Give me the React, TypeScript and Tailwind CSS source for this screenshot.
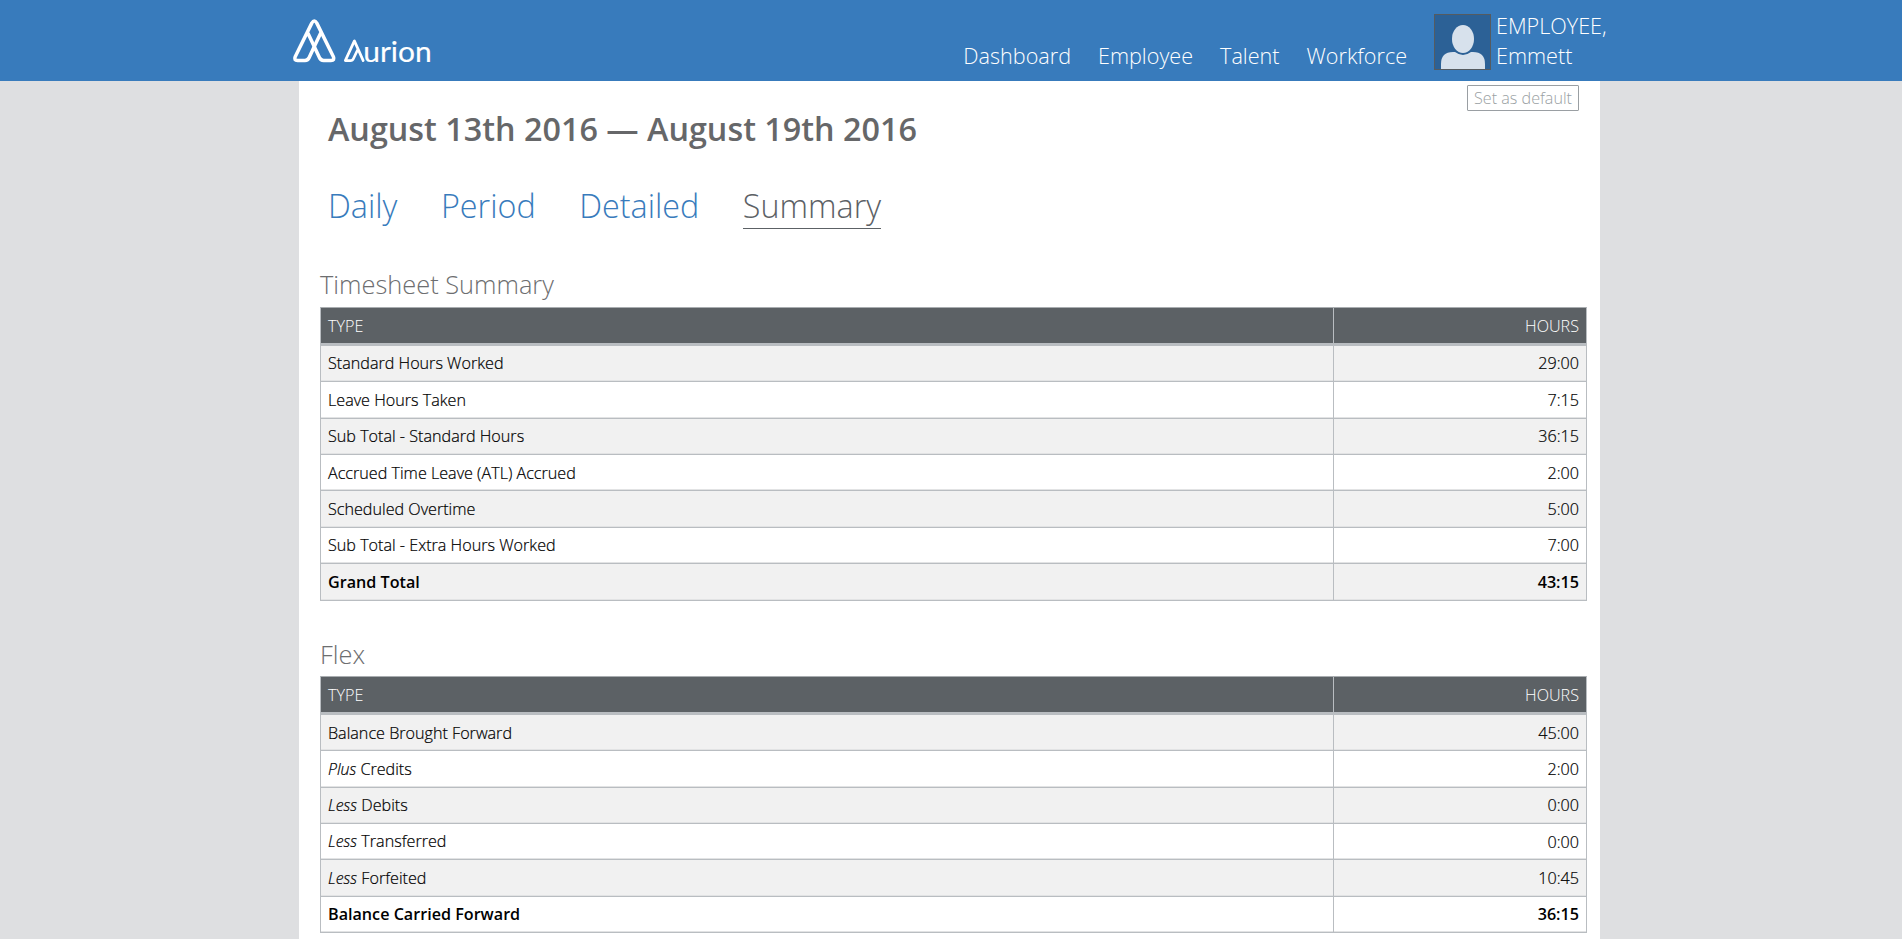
import type { ReactNode } from "react";

type Row = { label: ReactNode; hours: string; total?: boolean };

const timesheetRows: Row[] = [
  { label: "Standard Hours Worked", hours: "29:00" },
  { label: "Leave Hours Taken", hours: "7:15" },
  { label: "Sub Total - Standard Hours", hours: "36:15" },
  { label: "Accrued Time Leave (ATL) Accrued", hours: "2:00" },
  { label: "Scheduled Overtime", hours: "5:00" },
  { label: "Sub Total - Extra Hours Worked", hours: "7:00" },
  { label: "Grand Total", hours: "43:15", total: true },
];

const flexRows: Row[] = [
  { label: "Balance Brought Forward", hours: "45:00" },
  { label: <><em className="text-[15.9px]">Plus</em> Credits</>, hours: "2:00" },
  { label: <><em className="text-[15.9px]">Less</em> Debits</>, hours: "0:00" },
  { label: <><em className="text-[15.9px]">Less</em> Transferred</>, hours: "0:00" },
  { label: <><em className="text-[15.9px]">Less</em> Forfeited</>, hours: "10:45" },
  { label: "Balance Carried Forward", hours: "36:15", total: true },
];

function Logo() {
  return (
    <svg className="block h-[60px] w-[150px] overflow-visible" viewBox="0 0 150 60" fill="none" stroke="#fff" strokeLinecap="round" strokeLinejoin="round" aria-label="Aurion">
      <g strokeWidth="3.5">
        <path d="M23.3 30.5 L18.2 41.5 Q17 44.4 14 44.4 H6.6 Q2.6 44.4 4.2 40.7 L20.8 7.1 Q23.3 3.1 25.8 7.1 L42.4 40.7 Q44 44.4 40 44.4 H32.6 Q29.6 44.4 28.4 41.5 L17.1 17.5" />
        <path d="M23.3 30.5 L29.5 17.5" />
      </g>
      <path strokeWidth="2.7" d="M72.2 44.6 L63.4 24.9 L54.3 44.6 H59.5 Q61.6 44.6 62.5 42.5 L66.3 34.5" />
      <text x="72.2" y="45.6" fill="#fff" strokeWidth="0.15" fontFamily="Lato" fontSize="28" textLength="68.5" lengthAdjust="spacingAndGlyphs">urion</text>
    </svg>
  );
}

function Avatar() {
  return (
    <svg className="block h-[56px] w-[57px] border border-[#555b60] bg-[#2c6196]" viewBox="0 0 55 54">
      <ellipse cx="28" cy="24" rx="11" ry="14" fill="#d7e1ec" />
      <path d="M6 54 V49 Q6 37 18 37 H20 Q28 43 36 37 H38 Q50 37 50 49 V54 Z" fill="#d7e1ec" />
    </svg>
  );
}

function SummaryTable({ rows }: { rows: Row[] }) {
  return (
    <div className="w-[1267px] border border-t-[#a9adb0] border-[#b9bdc1] text-[16.15px]">
      <div className="flex h-[38px] border-b-[3px] border-[#b9bdc1] bg-[#5c6165] font-light text-white">
        <div className="flex grow items-center pl-[7px] pt-[2px]">TYPE</div>
        <div className="flex w-[253px] items-center justify-end border-l border-[#b9bdc1] pt-[2px] pr-[7px]">HOURS</div>
      </div>
      {rows.map((row, i) => (
        <div
          key={i}
          className={
            "flex h-[36.4px] border-b border-[#b9bdc1] text-black last:h-[35.4px] last:border-b-0 odd:bg-white even:bg-[#f1f1f1] " +
            (row.total ? "font-semibold" : "font-light [-webkit-text-stroke:0.2px_black]")
          }
        >
          <div className="flex grow items-center whitespace-pre pl-[7px] shadow-[inset_0_-1px_0_#e2e3e4]"><span>{row.label}</span></div>
          <div className="flex w-[253px] items-center justify-end border-l border-[#b9bdc1] pr-[7px] shadow-[inset_0_-1px_0_#e2e3e4]">{row.hours}</div>
        </div>
      ))}
    </div>
  );
}

export default function App() {
  return (
    <div className="flex h-[939px] w-[1902px] flex-col overflow-hidden bg-[#dedfe1] font-['Open_Sans',sans-serif]">
      <header className="flex h-[81px] shrink-0 bg-[#387bbc] text-white">
        <div className="pl-[291px] pt-[16px]"><Logo /></div>
        <nav className="ml-auto flex gap-[27px] pt-[41px] text-[21.6px] leading-[30px] font-light">
          <a>Dashboard</a>
          <a>Employee</a>
          <a>Talent</a>
          <a>Workforce</a>
        </nav>
        <div className="ml-[27px] flex w-[468px] pt-[14px]">
          <Avatar />
          <div className="-mt-[3px] ml-[5px] text-[21.6px] leading-[30px] font-light">
            <div>EMPLOYEE,</div>
            <div>Emmett</div>
          </div>
        </div>
      </header>
      <main className="ml-[299px] w-[1301px] grow bg-white">
        <div className="flex justify-between pl-[29px] pr-[21px]">
          <h1 className="pt-[25px] text-[32.35px] leading-[44px] font-semibold text-[#666769]">August 13th 2016 — August 19th 2016</h1>
          <button className="mt-[4px] flex h-[26px] w-[112px] items-center justify-center rounded-[1px] border border-[#9a9fa3] text-[16.15px] font-light text-[#9a9fa3]">Set as default</button>
        </div>
        <div className="flex gap-[43.6px] pl-[29px] pt-[33px] text-[32.3px] leading-[45px] font-light text-[#387bbc]">
          <a>Daily</a>
          <a>Period</a>
          <a>Detailed</a>
          <a className="border-b border-[#5c6165] text-[#5c6165]">Summary</a>
        </div>
        <section className="pl-[21px] pt-[37px]">
          <h2 className="h-[40.8px] text-[25.4px] leading-[36px] font-light text-[#6d6e70]">Timesheet Summary</h2>
          <SummaryTable rows={timesheetRows} />
        </section>
        <section className="pl-[21px] pt-[35px]">
          <h2 className="h-[40.4px] text-[25.4px] leading-[36px] font-light text-[#6d6e70]">Flex</h2>
          <SummaryTable rows={flexRows} />
        </section>
      </main>
    </div>
  );
}
